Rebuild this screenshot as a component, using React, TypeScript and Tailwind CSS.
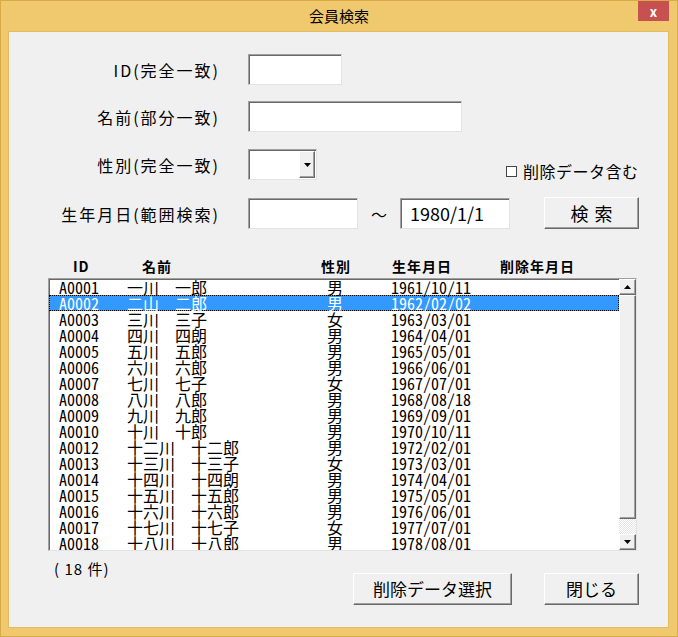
import type { ReactNode } from "react";

type Member = { id: string; name: string; sex: string; born: string };

const members: Member[] = [
  { id: "A0001", name: "一川　一郎", sex: "男", born: "1961/10/11" },
  { id: "A0002", name: "二山　二郎", sex: "男", born: "1962/02/02" },
  { id: "A0003", name: "三川　三子", sex: "女", born: "1963/03/01" },
  { id: "A0004", name: "四川　四朗", sex: "男", born: "1964/04/01" },
  { id: "A0005", name: "五川　五郎", sex: "男", born: "1965/05/01" },
  { id: "A0006", name: "六川　六郎", sex: "男", born: "1966/06/01" },
  { id: "A0007", name: "七川　七子", sex: "女", born: "1967/07/01" },
  { id: "A0008", name: "八川　八郎", sex: "男", born: "1968/08/18" },
  { id: "A0009", name: "九川　九郎", sex: "男", born: "1969/09/01" },
  { id: "A0010", name: "十川　十郎", sex: "男", born: "1970/10/11" },
  { id: "A0012", name: "十二川　十二郎", sex: "男", born: "1972/02/01" },
  { id: "A0013", name: "十三川　十三子", sex: "女", born: "1973/03/01" },
  { id: "A0014", name: "十四川　十四朗", sex: "男", born: "1974/04/01" },
  { id: "A0015", name: "十五川　十五郎", sex: "男", born: "1975/05/01" },
  { id: "A0016", name: "十六川　十六郎", sex: "男", born: "1976/06/01" },
  { id: "A0017", name: "十七川　十七子", sex: "女", born: "1977/07/01" },
  { id: "A0018", name: "十八川　十八郎", sex: "男", born: "1978/08/01" },
];

const sunken =
  "border border-[#a0a0a0] border-b-[#e3e3e3] border-r-[#e3e3e3] bg-white shadow-[inset_1px_1px_0_#696969]";
const raised =
  "border border-white border-b-[#696969] border-r-[#696969] bg-[#f0f0f0] shadow-[inset_-1px_-1px_0_#a0a0a0]";

function Label({ children }: { children: ReactNode }) {
  return (
    <div className="flex h-[31px] w-[211px] items-center justify-end text-[16px] tracking-[2px]">{children}</div>
  );
}

function Arrow({ up }: { up?: boolean }) {
  return (
    <svg width="7" height="4" viewBox="0 0 7 4">
      <polygon points={up ? "0,4 7,4 3.5,0" : "0,0 7,0 3.5,4"} fill="#000" />
    </svg>
  );
}

function Button({ w, children, className = "" }: { w: string; children: ReactNode; className?: string }) {
  return (
    <div className={`flex h-[32px] items-center justify-center text-[17px] ${raised} ${w} ${className}`}>{children}</div>
  );
}

export default function App() {
  return (
    <div className="h-[637px] w-[678px] border border-[#d9ab48] bg-[#f0c86e] font-['Noto_Sans_CJK_JP',sans-serif] text-black">
      <div className="grid h-[30px] grid-cols-[1fr_auto_1fr]">
        <div />
        <div className="pt-[5px] text-[15px] leading-[20px]">会員検索</div>
        <div className="mr-[8px] flex h-[20px] w-[31px] items-center justify-center justify-self-end bg-[#c75050] text-[13px] font-bold leading-none text-white">
          x
        </div>
      </div>

      <div className="ml-[7px] h-[597px] w-[661px] border border-[#e2bb62] bg-[#f0f0f0]">
        {/* 検索条件 */}
        <div className="mt-[22px] flex">
          <Label>ID(完全一致)</Label>
          <div className={`ml-[28px] h-[31px] w-[94px] ${sunken}`} />
        </div>
        <div className="mt-[16px] flex">
          <Label>名前(部分一致)</Label>
          <div className={`ml-[28px] h-[31px] w-[214px] ${sunken}`} />
        </div>
        <div className="mt-[17px] flex h-[31px] items-start">
          <Label>性別(完全一致)</Label>
          <div className={`ml-[28px] flex h-[31px] w-[69px] justify-end p-[1px] ${sunken}`}>
            <div className={`flex h-[27px] w-[16px] items-center justify-center ${raised}`}>
              <Arrow />
            </div>
          </div>
          <div className="ml-[189px] mt-[14px] flex h-[17px] items-center gap-[6px]">
            <div className="h-[11px] w-[11px] border border-[#444] bg-white" />
            <span className="text-[16px] leading-[17px] tracking-[0.5px]">削除データ含む</span>
          </div>
        </div>
        <div className="mt-[18px] flex h-[31px] items-start">
          <Label>生年月日(範囲検索)</Label>
          <div className={`ml-[28px] h-[31px] w-[110px] ${sunken}`} />
          <div className="flex h-[31px] w-[42px] items-center justify-center text-[16px]">～</div>
          <div className={`flex h-[31px] w-[110px] items-center pl-[9px] text-[18px] ${sunken}`}>1980/1/1</div>
          <Button w="w-[95px]" className="-mt-[1px] ml-[34px] pl-[6px] text-[18px] tracking-[6px]">
            検索
          </Button>
        </div>

        {/* 一覧 */}
        <div className="ml-[39px] mt-[27px] flex h-[20px] items-center pl-[25px] text-[14px] font-bold tracking-[1px]">
          <span className="w-[69px]">ID</span>
          <span className="w-[179px]">名前</span>
          <span className="w-[71px]">性別</span>
          <span className="w-[108px]">生年月日</span>
          <span>削除年月日</span>
        </div>
        <div className={`ml-[39px] mt-[2px] flex h-[273px] w-[589px] ${sunken}`}>
          <div className="flex-1 overflow-hidden text-[16px] leading-[16px]">
            {members.map((m, i) => (
              <div
                key={m.id}
                className={`flex h-[16px] items-center whitespace-nowrap ${
                  i === 1 ? "border border-dotted border-black bg-[#3399ff] pl-[9px] text-white" : "pl-[10px]"
                }`}
              >
                <span className="w-[68px] [font-feature-settings:'hwid']">{m.id}</span>
                <span className="w-[200px]">{m.name}</span>
                <span className="w-[64px]">{m.sex}</span>
                <span className="[font-feature-settings:'hwid']">{m.born}</span>
              </div>
            ))}
          </div>
          <div className="flex w-[17px] flex-col">
            <div className={`flex h-[16px] items-center justify-center ${raised}`}>
              <Arrow up />
            </div>
            <div className={`h-[224px] ${raised}`} />
            <div className="flex-1 bg-[repeating-conic-gradient(#e4e4e4_0_25%,#ffffff_0_50%)] bg-[length:2px_2px]" />
            <div className={`flex h-[16px] items-center justify-center ${raised}`}>
              <Arrow />
            </div>
          </div>
        </div>

        {/* 件数とボタン */}
        <div className="mt-[10px] flex items-start">
          <div className="ml-[45px] text-[15px] leading-[16px] tracking-[1px]">(&nbsp;18&nbsp;件)</div>
          <div className="ml-auto mr-[29px] mt-[12px] flex gap-[32px]">
            <Button w="w-[159px]">削除データ選択</Button>
            <Button w="w-[95px]">閉じる</Button>
          </div>
        </div>
      </div>
    </div>
  );
}
